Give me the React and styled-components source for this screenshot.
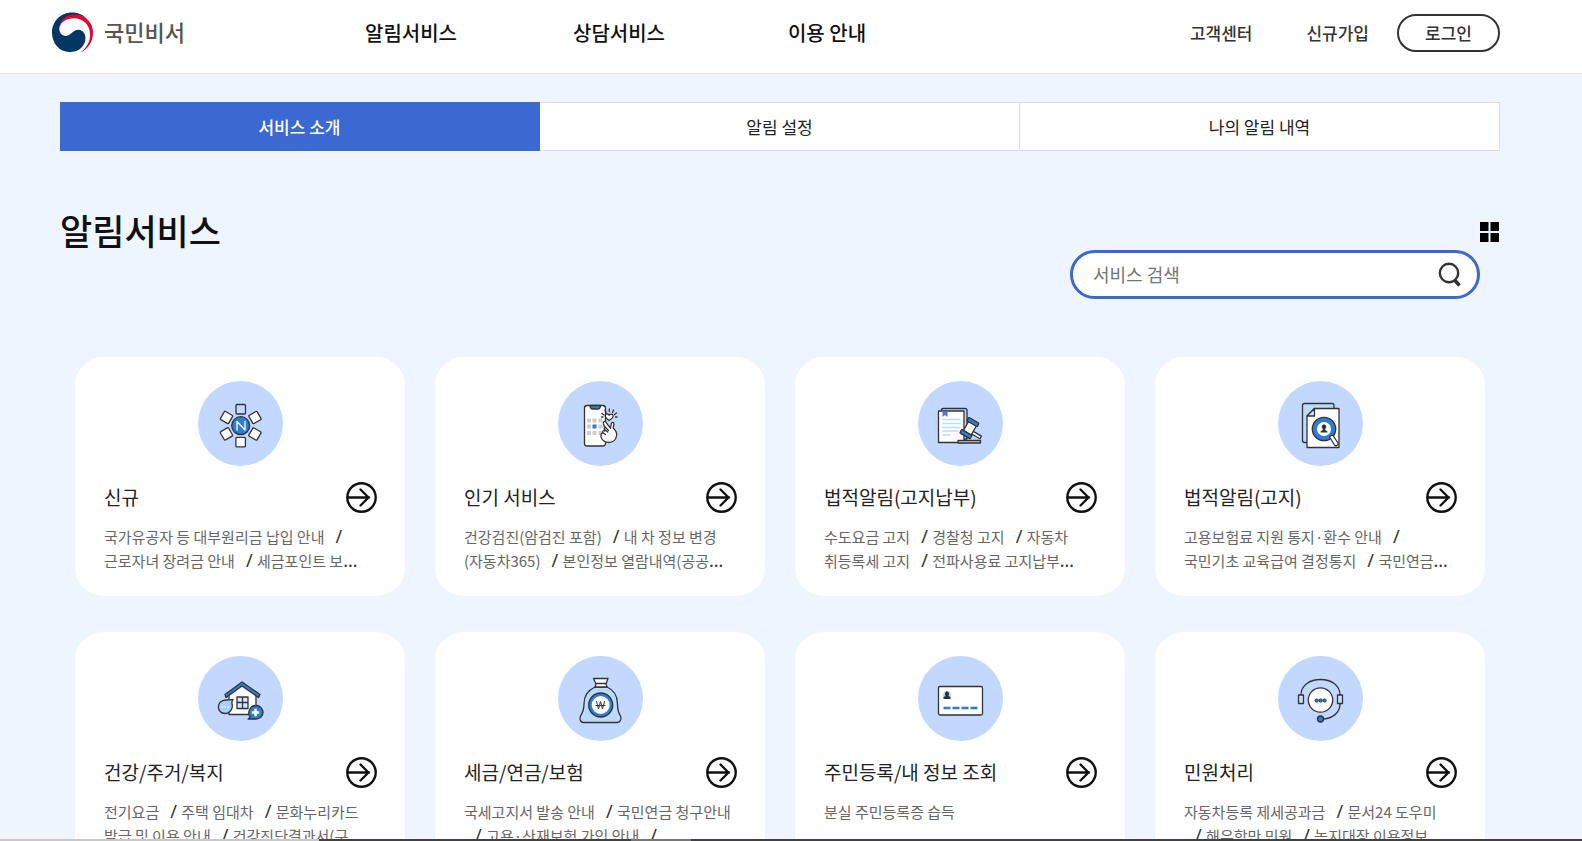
import React from "react";
import styled, { createGlobalStyle, css } from "styled-components";

const GlobalStyle = createGlobalStyle`
  *, *::before, *::after { box-sizing: border-box; }
  body {
    margin: 0;
    background: #eef5ff;
    color: #1d1d1d;
    font-family: "Noto Sans CJK KR", "Noto Sans", sans-serif;
    word-break: keep-all;
  }
  h1, h2, p, ul { margin: 0; padding: 0; }
  ul { list-style: none; }
  a { color: inherit; text-decoration: none; }
  button, input { font: inherit; color: inherit; }
  button { cursor: pointer; }
`;

const Header = styled.header`
  display: flex;
  align-items: center;
  height: 74px;
  padding: 0 82px 8px 51px;
  background: #fff;
  border-bottom: 1px solid #dfe3ec;
`;

const Logo = styled.a`
  display: flex;
  align-items: center;
  gap: 10px;
  width: 256px;
`;

const LogoText = styled.span`
  padding-bottom: 4px;
  color: #555;
  font-size: 22px;
  font-weight: 500;
  line-height: 32px;
`;

const MainNav = styled.nav`
  display: flex;
  flex: 1;
`;

const MainLink = styled.a`
  width: 208px;
  text-align: center;
  color: #111;
  font-size: 20px;
  font-weight: 500;
  line-height: 30px;
`;

const UserMenu = styled.div`
  display: flex;
  align-items: center;
  gap: 54px;
  color: #333;
  font-size: 17px;
  font-weight: 500;
`;

const LoginButton = styled.button`
  width: 103px;
  height: 38px;
  margin-left: -26px;
  padding: 0;
  background: #fff;
  border: 2px solid #333;
  border-radius: 19px;
  line-height: 24px;
`;

const Main = styled.main`
  padding: 28px 82px 40px 60px;
`;

const Tabs = styled.nav`
  display: grid;
  grid-template-columns: repeat(3, 1fr);
`;

const Tab = styled.a`
  display: flex;
  align-items: center;
  justify-content: center;
  height: 49px;
  background: #fff;
  border: 1px solid #dcdcdc;
  border-left-width: 0;
  color: #222;
  font-size: 17px;

  ${({ $active }) =>
    $active &&
    css`
      background: #3c68d1;
      border-color: #3c68d1;
      color: #fff;
      font-weight: 500;
    `}
`;

const TitleRow = styled.div`
  display: flex;
  align-items: center;
  justify-content: space-between;
  height: 50px;
  margin-top: 56px;
`;

const PageTitle = styled.h1`
  padding-bottom: 4px;
  color: #111;
  font-size: 35px;
  font-weight: 500;
  line-height: 46px;
`;

const GridButton = styled.button`
  display: flex;
  padding: 0;
  background: none;
  border: 0;
`;

const SearchForm = styled.form`
  display: flex;
  align-items: center;
  width: 410px;
  height: 49px;
  margin: -7px 20px 0 auto;
  padding: 0 15px 0 20px;
  background: #fff;
  border: 3px solid #3c68d1;
  border-radius: 25px;
`;

const SearchInput = styled.input`
  flex: 1;
  min-width: 0;
  padding: 0 0 2px;
  background: none;
  border: 0;
  outline: 0;
  font-size: 18px;
  line-height: 26px;

  &::placeholder { color: #757575; opacity: 1; }
`;

const SearchButton = styled.button`
  display: flex;
  padding: 0;
  background: none;
  border: 0;
`;

const CardGrid = styled.ul`
  display: grid;
  grid-template-columns: repeat(4, 1fr);
  gap: 36px 30px;
  margin-top: 58px;
  padding: 0 15px;
`;

const Card = styled.li`
  min-height: 239px;
  padding: 24px 28px 22px 29px;
  background: #fff;
  border-radius: 28px;
`;

const IconDisc = styled.div`
  display: flex;
  align-items: center;
  justify-content: center;
  width: 85px;
  height: 85px;
  margin: 0 auto;
  background: #c3d8ff;
  border-radius: 50%;
`;

const CardHead = styled.div`
  display: flex;
  align-items: center;
  justify-content: space-between;
  margin-top: 16px;
`;

const CardTitle = styled.h2`
  padding-bottom: 2px;
  color: #222;
  font-size: 19px;
  font-weight: 400;
  line-height: 29px;
`;

const ArrowLink = styled.a`
  display: flex;
`;

const Services = styled.p`
  height: 48px;
  margin-top: 12px;
  padding-right: 5px;
  color: #666;
  font-size: 15px;
  line-height: 24px;
`;

const Slash = styled.span`
  margin: 0 1px 0 11px;
  color: #333;
  font-family: "Noto Sans", sans-serif;
  font-size: 18px;
  line-height: 20px;
`;

const Ellipsis = styled.span`
  color: #333;
  font-family: "Noto Sans", sans-serif;
  font-size: 18px;
  line-height: 20px;
`;

const BottomEdge = styled.div`
  position: fixed;
  right: 0;
  bottom: 0;
  left: 0;
  display: flex;
  height: 2px;
  background: #414042;
`;

const EdgePart = styled.span`
  width: ${({ $width }) => $width};
  background: ${({ $color }) => $color};
`;

const Emblem = () => (
  <svg width="43" height="41" viewBox="0 0 43 42" aria-hidden="true">
    <path d="M21 0.500C27 0.500 33 3 37 8C31 1.500 21 2 15 6C9 10 7 16 8.500 20C10 25 16 26 20 22C24 18 28 17 31.500 19.500C36 23 36 31 31 36C28 39.500 23 41 18.500 41C8 41 0.500 32 0.500 21C0.500 9 10 0.500 21 0.500Z" fill="#003764" />
    <path d="M8.200 16C9 8 15 2.500 23 2.500C34 2.500 42.500 10 42.500 21C42.500 30.500 37 38.500 29.500 41.500C36.500 36 40 30 39.500 22C39 12 31 6.500 23 6.500C15 6.500 10 10 8.200 16Z" fill="#e4032e" />
  </svg>
);

const GridIcon = () => (
  <svg width="20" height="20" viewBox="0 0 20 20" aria-hidden="true">
    <path d="M0 0h8.500v9H0zM10.500 0h8.500v9h-8.500zM0 11h8.500v9H0zM10.500 11h8.500v9h-8.500z" fill="#000" />
  </svg>
);

const SearchIcon = () => (
  <svg width="24" height="25" viewBox="0 0 24 25" fill="none" stroke="#333" aria-hidden="true">
    <circle cx="11" cy="11" r="9.200" strokeWidth="2.400" />
    <path d="M16.500 18l5 5.500" strokeWidth="3.600" />
  </svg>
);

const ArrowIcon = () => (
  <svg width="31" height="31" viewBox="0 0 31 31" fill="none" stroke="#111" strokeWidth="2.400" aria-hidden="true">
    <circle cx="15.500" cy="15.500" r="14.200" />
    <path d="M2 15.500h21M14.500 7.500l8 8-8 8" strokeLinejoin="round" strokeLinecap="round" />
  </svg>
);

const Drawing = ({ children }) => (
  <svg width="85" height="85" viewBox="0 0 85 85" fill="none" stroke="#333" strokeWidth="1.300" strokeLinejoin="round" strokeLinecap="round" aria-hidden="true">
    {children}
  </svg>
);

const NewIcon = () => (
  <Drawing>
    <rect x="38" y="23.500" width="9.500" height="9.500" rx="1" />
    {[60, 120, 180, 240, 300].map((angle) => (
      <rect key={angle} x="38" y="23.500" width="9.500" height="9.500" rx="1" fill="#fff" transform={`rotate(${angle} 42.700 44.700)`} />
    ))}
    <circle cx="42.700" cy="44.700" r="9" fill="#2e7dd1" />
    <path d="M39 49v-8.500l8 8.500v-8.500" stroke="#fff" />
  </Drawing>
);

const PhoneIcon = () => (
  <Drawing>
    <rect x="26.500" y="24.500" width="21" height="40.500" rx="2.500" fill="#fff" />
    <path d="M32 24.500h10.500c0 2-1 3.500-3 3.500H35c-2 0-3-1.500-3-3.500Z" fill="#2e7dd1" />
    <path d="M29 37.500h4v4h-4zM34.500 37.500h4v4h-4zM40.500 37.500h4v4h-4zM29 43.500h4v4h-4zM40.500 43.500h4v4h-4zM29 50h4v4h-4zM34.500 50h4v4h-4zM40.500 50h4v4h-4z" fill="#ccc" stroke="none" />
    <path d="M34.500 43.500h4v4h-4z" fill="#2e7dd1" stroke="none" />
    <path d="M51 39.500c-2.500-1.800-4.500-3.500-3.500-5.500 1-1.800 3-1 3.700.300 1-1.600 3.300-1.600 3.800.200.500 2-1.500 3.500-4 5Z" fill="#fff" />
    <path d="M44 32.500l2 1.500M47 29l1 2.500M51.300 28v2.500M55.500 29l-1 2.500M58.500 32l-2 1.500M57.500 36h1.500M43.500 36H45" />
    <path d="M46.500 46l-1.200-3.500c-.500-2 1.700-2.800 2.700-1.200l4.500 6 .700-4.500c.500-2 3-1.700 2.700.500l-.700 4c2.500 2 3.800 4.700 3.300 7.700-.700 4-4 6.500-8 6.500-5 0-8.500-4.500-7.500-8 .300-1 1-1.500 2-1.500-1-2 .500-3 1.700-2-.700-1.800-.200-3.500-.200-4Z" fill="#fff" />
    <path d="M45 52l2.500 1.500M46.700 48.500l3 2.500M46.500 45.500l4 4" />
  </Drawing>
);

const GavelIcon = () => (
  <Drawing>
    <path d="M23.500 30v-1c0-1 .700-1.500 1.500-1.500h22c1.200 0 2 .800 2 2V58h-3" fill="#bcdcff" />
    <path d="M20.500 30h25.500v31.500H20.500z" fill="#fff" />
    <path d="M24.500 30.500h5v5.500l-2.500-2-2.500 2z" fill="#4f78d6" stroke="none" />
    <path d="M25 38.500h17M25 42.500h17M25 46.500h17M25 50h15M25 54h7" stroke="#bcdcff" />
    <path d="M40 59.500h22.500V62H40z" fill="#ccd9e6" />
    <g transform="rotate(30 52 48)">
      <path d="M54 48.500h11.500v3H54z" fill="#fff" />
      <rect x="47" y="41.500" width="9" height="12.500" rx="1" fill="#fff" />
      <rect x="45" y="38.500" width="12" height="4" rx="1" fill="#2e7dd1" />
      <rect x="45" y="52.500" width="12" height="4" rx="1" fill="#2e7dd1" />
    </g>
  </Drawing>
);

const DocumentIcon = () => (
  <Drawing>
    <rect x="24.500" y="22.500" width="31.500" height="39" rx="2" fill="#bbdcff" />
    <path d="M36.500 27.500H61v39H29V35z" fill="#fff" />
    <path d="M36.500 27.500V35H29z" fill="#d5e6ff" />
    <circle cx="46" cy="48" r="11.700" fill="#2e7dd1" />
    <circle cx="46" cy="48" r="7" fill="#fff" stroke="none" />
    <path d="M42.500 51.500c0-1.500 1-2 2.300-2.500v-1c-2-2-1-4.500 1.200-4.500s3.200 2.500 1.200 4.500v1c1.300.500 2.300 1 2.300 2.500z" fill="#333" stroke="none" />
    <path d="M51.500 56c1-1.500 2-2 3.500-1.500l5 7.500c.700 2.500-2 3.500-3.500 2z" fill="#fff" />
  </Drawing>
);

const HouseIcon = () => (
  <Drawing>
    <path d="M31 39v19.500h27V39L44 29z" fill="#fff" />
    <path d="M27 38.500L44 26l18 12.500-1.500 3L44 30 28 41.500z" fill="#2e7dd1" />
    <path d="M39 41h11v11.500H39zM44.500 41v11.500M39 46.500h11" fill="#d5e6ff" />
    <path d="M28 44c2 0 3.500-.500 7-.500-1 1.500-1 2.500-1.200 3.500 2 5-1.800 10.500-6.800 10.500-8.500 0-9.500-13 1-13.500Z" fill="#a9d0f8" />
    <path d="M24 51h.2M27 51h.2M30 51h.2" stroke="#fff" strokeWidth="1.500" />
    <path d="M50 63c1-.500 1.500-1 2-1.800-3-5 0-11.700 6-11.700 4 0 7 3.300 7 7s-3 6.500-7 6.500z" fill="#2e7dd1" />
    <path d="M57.500 52.800v7.400M53.800 56.500h7.400" stroke="#fff" strokeWidth="2.600" strokeLinecap="butt" />
  </Drawing>
);

const MoneyIcon = () => (
  <Drawing>
    <path d="M37 31h12c8 3.500 10.500 9 10.500 17 0 6 1 9 3 12 1.500 3-.500 6.500-3 6.500H25.500c-3 0-4.500-3.500-3-6.500 2-3 3.500-6 3.500-12 0-8 3.500-13.500 11-17Z" fill="#b9dbfd" />
    <path d="M35.500 22.500h14.500l-2 5.500 1 3H37l1-3z" fill="#fff" />
    <path d="M38 27.500h10" />
    <circle cx="42.700" cy="49" r="12" fill="#2e7dd1" />
    <circle cx="42.700" cy="49" r="9" fill="#fff" stroke="none" />
    <path d="M38.500 45.500l2 7.500 2-7.500 2 7.500 2-7.500M38 49.500h9" strokeWidth="1" />
  </Drawing>
);

const IdCardIcon = () => (
  <Drawing>
    <rect x="20.500" y="30.500" width="44" height="28.500" rx="1.500" fill="#fff" />
    <circle cx="29" cy="39" r="4" fill="#bcd6ff" stroke="none" />
    <path d="M25.500 43v-2l2-1c-1-2-.500-4.500 1.500-4.500s2.500 2.500 1.500 4.500l2 1v2z" fill="#333" stroke="none" />
    <path d="M25.500 52h34" stroke="#2e7dd1" strokeWidth="2.600" strokeLinecap="butt" strokeDasharray="7 2" />
  </Drawing>
);

const HeadsetIcon = () => (
  <Drawing>
    <path d="M23 39C23 29 32 23.500 42.500 23.500S62 29 62 39M62 48c0 9-8 15-18 15" />
    <circle cx="42.500" cy="44" r="12.200" fill="#fff" />
    <rect x="20.500" y="39" width="5" height="8.500" fill="#c9def9" />
    <rect x="59.500" y="39" width="5" height="8.500" fill="#c9def9" />
    <path d="M38.500 44.500h.2M42.500 44.500h.2M46.500 44.500h.2" strokeWidth="3.800" />
    <path d="M38.500 44.500h.2M42.500 44.500h.2M46.500 44.500h.2" stroke="#2e7dd1" strokeWidth="2.400" />
    <circle cx="42.500" cy="63" r="3" fill="#2e7dd1" />
  </Drawing>
);

const cards = [
  { title: "신규", Icon: NewIcon, items: ["국가유공자 등 대부원리금 납입 안내", "근로자녀 장려금 안내", "세금포인트 보"], more: true },
  { title: "인기 서비스", Icon: PhoneIcon, items: ["건강검진(암검진 포함)", "내 차 정보 변경 (자동차365)", "본인정보 열람내역(공공"], more: true },
  { title: "법적알림(고지납부)", Icon: GavelIcon, items: ["수도요금 고지", "경찰청 고지", "자동차 취등록세 고지", "전파사용료 고지납부"], more: true },
  { title: "법적알림(고지)", Icon: DocumentIcon, items: ["고용보험료 지원 통지·환수 안내", "국민기초 교육급여 결정통지", "국민연금"], more: true },
  { title: "건강/주거/복지", Icon: HouseIcon, items: ["전기요금", "주택 임대차", "문화누리카드 발급 및 이용 안내", "건강진단결과서(구"], more: true },
  { title: "세금/연금/보험", Icon: MoneyIcon, items: ["국세고지서 발송 안내", "국민연금 청구안내", "고용·산재보험 가입 안내", ""], more: true },
  { title: "주민등록/내 정보 조회", Icon: IdCardIcon, items: ["분실 주민등록증 습득"] },
  { title: "민원처리", Icon: HeadsetIcon, items: ["자동차등록 제세공과금", "문서24 도우미", "해우학만 민원", "농지대장 이용정보"] },
];

const ServiceCard = ({ title, Icon, items, more }) => (
  <Card>
    <IconDisc>
      <Icon />
    </IconDisc>
    <CardHead>
      <CardTitle>{title}</CardTitle>
      <ArrowLink href="#" aria-label={title}>
        <ArrowIcon />
      </ArrowLink>
    </CardHead>
    <Services>
      {items.map((item, index) => (
        <React.Fragment key={item}>
          {index > 0 && (
            <>
              <wbr />
              <Slash>/</Slash>{" "}
            </>
          )}
          {item}
        </React.Fragment>
      ))}
      {more && <Ellipsis>…</Ellipsis>}
    </Services>
  </Card>
);

export default function App() {
  return (
    <>
      <GlobalStyle />
      <Header>
        <Logo href="#">
          <Emblem />
          <LogoText>국민비서</LogoText>
        </Logo>
        <MainNav>
          <MainLink href="#">알림서비스</MainLink>
          <MainLink href="#">상담서비스</MainLink>
          <MainLink href="#">이용 안내</MainLink>
        </MainNav>
        <UserMenu>
          <a href="#">고객센터</a>
          <a href="#">신규가입</a>
          <LoginButton type="button">로그인</LoginButton>
        </UserMenu>
      </Header>
      <Main>
        <Tabs>
          <Tab href="#" $active aria-current="page">서비스 소개</Tab>
          <Tab href="#">알림 설정</Tab>
          <Tab href="#">나의 알림 내역</Tab>
        </Tabs>
        <TitleRow>
          <PageTitle>알림서비스</PageTitle>
          <GridButton type="button" aria-label="격자 보기">
            <GridIcon />
          </GridButton>
        </TitleRow>
        <SearchForm role="search">
          <SearchInput type="text" placeholder="서비스 검색" aria-label="서비스 검색" />
          <SearchButton type="button" aria-label="검색">
            <SearchIcon />
          </SearchButton>
        </SearchForm>
        <CardGrid>
          {cards.map((card) => (
            <ServiceCard key={card.title} {...card} />
          ))}
        </CardGrid>
      </Main>
      <BottomEdge>
        <EdgePart $width="319px" $color="#c8c8c8" />
        <EdgePart $width="312px" $color="#414042" />
        <EdgePart $width="60px" $color="#777" />
      </BottomEdge>
    </>
  );
}
